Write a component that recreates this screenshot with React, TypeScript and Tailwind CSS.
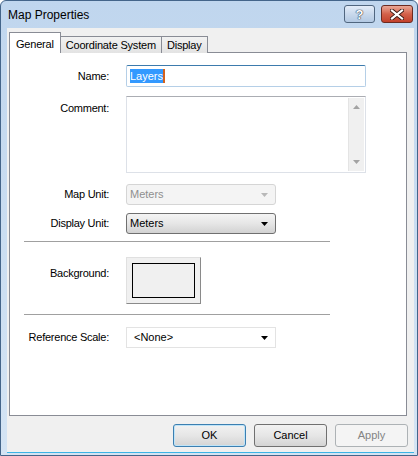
import React from "react";

const Label = ({ children }: { children: React.ReactNode }) => (
  <div className="w-[100px] shrink-0 text-right pr-[1px] text-[11px] tracking-[-0.25px] text-black">{children}</div>
);

const Arrow = ({ color = "#000" }: { color?: string }) => (
  <svg width="7" height="4" viewBox="0 0 7 4">
    <path d="M0 0h7L3.5 4z" fill={color} />
  </svg>
);

const App = () => {
  return (
    <div className="w-[418px] h-[456px] flex flex-col bg-gradient-to-b from-[#c0d6ee] to-[#d4e4f4] border border-[#44658a] rounded-t-[6px] overflow-hidden font-['Liberation_Sans',Arial,sans-serif] text-black select-none">
      {/* title bar */}
      <div className="h-[27px] shrink-0 flex items-start pl-[7px] pr-[4px]">
        <span className="mt-[5px] text-[12px] text-black">{"Map Properties"}</span>
        <div className="ml-auto mt-[4px] flex gap-[6px]">
          <div className="w-[31px] h-[18px] rounded-[3px] border border-[#50667f] bg-gradient-to-b from-[#e4edf8] via-[#c9d9ec] to-[#b3c9e3] flex items-center justify-center">
            <span className="text-[13px] font-bold leading-none text-white [text-shadow:0_0_1px_#2d3e52,0_0_1px_#2d3e52,0_0_1px_#2d3e52]">{"?"}</span>
          </div>
          <div className="w-[32px] h-[18px] rounded-[3px] border border-[#6b2a20] bg-gradient-to-b from-[#e9a796] via-[#d3614a] to-[#c2402a] flex items-center justify-center">
            <svg width="14" height="11" viewBox="0 0 14 11">
              <path d="M2 1.5L12 9.5M12 1.5L2 9.5" stroke="#3b1a14" strokeWidth="4" strokeLinecap="square" />
              <path d="M2 1.5L12 9.5M12 1.5L2 9.5" stroke="#ffffff" strokeWidth="2.2" strokeLinecap="square" />
            </svg>
          </div>
        </div>
      </div>

      {/* body */}
      <div className="flex-1 ml-[6px] mr-[3px] mb-[2px] bg-[#f0f0f0] border-b border-[#3cb4e6] flex flex-col pl-[2px] pt-[4px]">
        {/* tabs */}
        <div className="flex items-end h-[21px] relative z-10 text-[11px] tracking-[-0.2px]">
          <div className="h-[21px] px-[6px] bg-white border border-b-0 border-[#898c95] flex items-start pt-[3px]">{"General"}</div>
          <div className="h-[17px] px-[5px] bg-gradient-to-b from-[#f2f2f2] to-[#e3e3e3] border border-l-0 border-b-0 border-[#898c95] flex items-center">{"Coordinate System"}</div>
          <div className="h-[17px] px-[5px] bg-gradient-to-b from-[#f2f2f2] to-[#e3e3e3] border border-l-0 border-b-0 border-[#898c95] flex items-center">{"Display"}</div>
        </div>
        <div className="w-[398px] h-[364px] -mt-[1px] bg-white border border-[#898c95] flex flex-col pt-[12px]">
          {/* Name */}
          <div className="flex items-center h-[22px]">
            <Label>{"Name:"}</Label>
            <div className="ml-[16px] w-[240px] h-[22px] border border-[#b5cfe7] border-t-[#3d7bad] rounded-[2px] flex items-center pl-[3px]">
              <span className="bg-[#3399ff] text-white text-[11px] leading-[14px]">{"Layers"}</span>
              <span className="w-[2px] h-[14px] bg-[#d4621c]" />
            </div>
          </div>
          {/* Comment */}
          <div className="flex items-start mt-[9px]">
            <div className="pt-[4px]">
              <Label>{"Comment:"}</Label>
            </div>
            <div className="ml-[16px] w-[240px] h-[77px] border border-[#dde1e8] border-t-[#abadb3] flex justify-end p-[1px]">
              <div className="w-[16px] h-full bg-[#f0f0f0] border-l border-[#e4e4e4] flex flex-col items-center justify-between py-[7px]">
                <svg width="7" height="4" viewBox="0 0 7 4">
                  <path d="M3.5 0L7 4H0z" fill="#a3a3a3" />
                </svg>
                <svg width="7" height="4" viewBox="0 0 7 4">
                  <path d="M0 0h7L3.5 4z" fill="#a3a3a3" />
                </svg>
              </div>
            </div>
          </div>
          {/* Map Unit */}
          <div className="flex items-center mt-[11px] h-[21px]">
            <Label>{"Map Unit:"}</Label>
            <div className="ml-[16px] w-[150px] h-[21px] rounded-[3px] border border-[#d5d5d5] bg-[#f4f4f4] flex items-center pl-[3px] pr-[7px]">
              <span className="text-[11px] text-[#8f8f8f]">{"Meters"}</span>
              <div className="ml-auto">
                <Arrow color="#b8b8b8" />
              </div>
            </div>
          </div>
          {/* Display Unit */}
          <div className="flex items-center mt-[8px] h-[21px]">
            <Label>{"Display Unit:"}</Label>
            <div className="ml-[16px] w-[150px] h-[21px] rounded-[3px] border border-[#707070] bg-gradient-to-b from-[#f4f4f4] via-[#e6e6e6] to-[#d2d2d2] flex items-center pl-[3px] pr-[7px]">
              <span className="text-[11px]">{"Meters"}</span>
              <div className="ml-auto">
                <Arrow />
              </div>
            </div>
          </div>
          {/* separator */}
          <div className="ml-[14px] w-[306px] h-px bg-[#a0a0a0] mt-[7px]" />
          {/* Background */}
          <div className="flex items-start mt-[15px] h-[47px]">
            <div className="pt-[8px]">
              <Label>{"Background:"}</Label>
            </div>
            <div className="ml-[16px] w-[75px] h-[47px] border border-[#8a8a8a] border-t-[#e0e0e0] border-l-[#e0e0e0] bg-[#f0f0f0] p-[5px]">
              <div className="w-full h-full border border-black bg-[#f0f0f0]" />
            </div>
          </div>
          {/* separator */}
          <div className="ml-[14px] w-[306px] h-px bg-[#a0a0a0] mt-[10px]" />
          {/* Reference Scale */}
          <div className="flex items-start mt-[12px] h-[21px]">
            <div className="pt-[2px]">
              <Label>{"Reference Scale:"}</Label>
            </div>
            <div className="ml-[16px] w-[150px] h-[21px] border border-[#e3e3e3] bg-white flex items-center pl-[7px] pr-[7px]">
              <span className="text-[11px]">{"<None>"}</span>
              <div className="ml-auto">
                <Arrow />
              </div>
            </div>
          </div>
        </div>

        {/* buttons */}
        <div className="flex justify-end gap-[8px] mt-[8px] w-[399px]">
          <div className="w-[73px] h-[23px] rounded-[3px] border border-[#3c7fb1] bg-gradient-to-b from-[#f2f2f2] via-[#e6e6e6] to-[#d4d4d4] flex items-center justify-center text-[11px] shadow-[inset_0_0_0_1px_#bfe4f8]">{"OK"}</div>
          <div className="w-[73px] h-[23px] rounded-[3px] border border-[#707070] bg-gradient-to-b from-[#f2f2f2] via-[#e6e6e6] to-[#d4d4d4] flex items-center justify-center text-[11px]">{"Cancel"}</div>
          <div className="w-[73px] h-[23px] rounded-[3px] border border-[#adb2b5] bg-[#f4f4f4] flex items-center justify-center text-[11px] text-[#838383]">{"Apply"}</div>
        </div>
      </div>
    </div>
  );
};

export default App;
